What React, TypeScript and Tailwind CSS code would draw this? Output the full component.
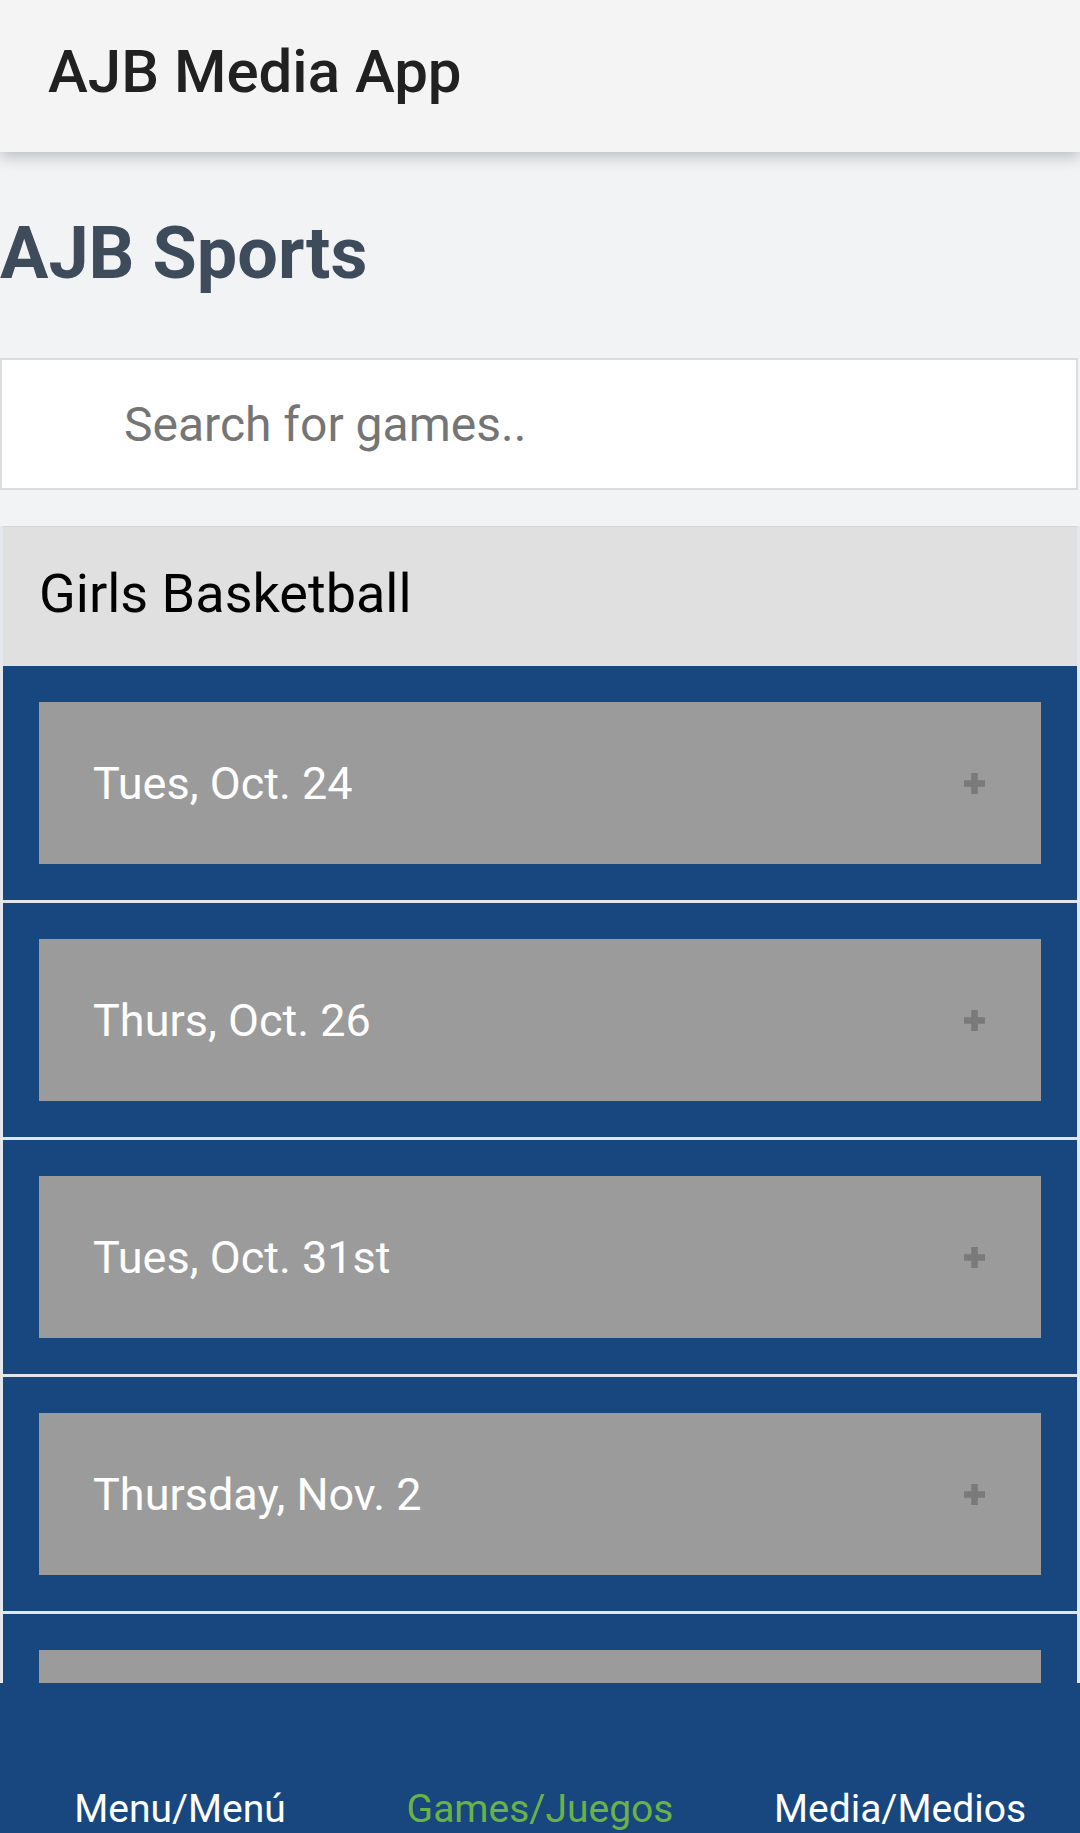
import React from "react";

const games = [
  "Tues, Oct. 24",
  "Thurs, Oct. 26",
  "Tues, Oct. 31st",
  "Thursday, Nov. 2",
  "Tues, Nov. 7",
  "Thurs, Nov. 9",
];

function Plus() {
  return (
    <svg width="23" height="23" viewBox="0 0 23 23" aria-hidden="true">
      <path d="M11.5 1v21M1 11.5h21" stroke="#7a7a7a" strokeWidth="6.5" />
    </svg>
  );
}

export default function App() {
  return (
    <div
      className="min-h-screen bg-[#f2f3f5] pb-[200px]"
      style={{ fontFamily: "Roboto, 'Noto Sans', Arial, sans-serif" }}
    >
      <header className="relative z-10 flex h-[152px] items-center bg-[#f4f4f4] pl-[48px] shadow-[0_5px_14px_rgba(0,0,0,0.22)]">
        <h1 className="text-[60px] font-medium leading-none text-[#212121] pb-[8px]">AJB Media App</h1>
      </header>

      <h2 className="mt-[66px] mb-[68px] text-[72px] font-bold leading-none text-[#3d4b5b]">AJB Sports</h2>

      <input
        type="text"
        placeholder="Search for games.."
        className="block h-[132px] w-[1078px] border-2 border-[#dcdcdc] bg-white pl-[122px] text-[48px] text-[#333] outline-none placeholder:text-[#757575]"
      />

      <section className="mt-[36px] border-x-[3px] border-[#e4e7ec]">
        <div className="h-[140px] border-t border-[#d6d6d6] bg-[#e0e0e0] pl-[36px] pt-[40px] text-[54px] leading-none text-black">
          Girls Basketball
        </div>
        <div className="flex flex-col gap-[3px] bg-[#e1e6ee]">
          {games.map((g) => (
            <div key={g} className="bg-[#18477f] p-[36px]">
              <div className="flex h-[162px] items-center justify-between bg-[#9b9b9b] pl-[54px] pr-[55px]">
                <span className="text-[45px] leading-none text-white">{g}</span>
                <Plus />
              </div>
            </div>
          ))}
        </div>
      </section>

      <nav className="fixed bottom-0 left-0 right-0 z-20 grid h-[150px] grid-cols-3 bg-[#18477f] pt-[107px] text-center text-[39px] leading-none">
        <span className="text-white">Menu/Menú</span>
        <span className="text-[#6bb246]">Games/Juegos</span>
        <span className="text-white">Media/Medios</span>
      </nav>
    </div>
  );
}
